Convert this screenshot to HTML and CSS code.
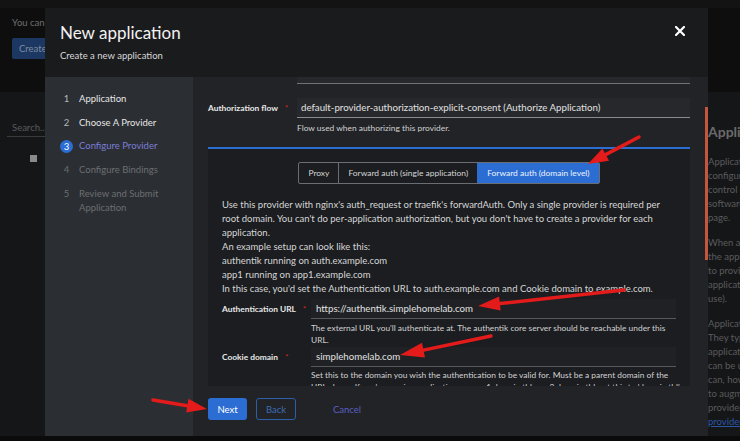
FILE: index.html
```html
<!DOCTYPE html>
<html lang="en">
<head>
<meta charset="utf-8">
<title>New application</title>
<link rel="stylesheet" href="styles.css">
</head>
<body>
<div class="page">
  <header class="page-head">
    <p class="lead">You can create new applications here.</p>
    <button class="btn-create">Create with wizard</button>
  </header>
  <div class="page-body">
    <div class="list">
      <div class="search">Search...</div>
      <span class="check"></span>
    </div>
    <aside class="help">
      <h2>Applications</h2>
      <p><span>Applications define how authentik</span><span>configures access and how you</span><span>control access to your</span><span>software from this single</span><span>page.</span></p>
      <p><span>When a user launches an app,</span><span>the application uses a provider</span><span>to provide authentication for the</span><span>application (the "how" to</span><span>use).</span></p>
      <p><span>Applications are linked to providers.</span><span>They typically map one-to-one to</span><span>applications, though one provider</span><span>can be used by multiple apps. You</span><span>can, however, use backchannel</span><span>to augment the primary</span><span>provider. Read more about</span><a href="#">providers</a></p>
    </aside>
  </div>
</div>
<div class="scroll-thumb"></div>

<div class="modal">
  <header class="modal-head">
    <div>
      <h1>New application</h1>
      <p class="sub">Create a new application</p>
    </div>
    <button class="close" aria-label="Close">
      <svg width="10" height="10" viewBox="0 0 10 10"><path d="M1 1L9 9M9 1L1 9" stroke="#fff" stroke-width="2.2" stroke-linecap="square"/></svg>
    </button>
  </header>
  <div class="modal-body">
    <nav class="steps">
      <ol>
        <li class="done"><span class="num">1</span><span class="lbl">Application</span></li>
        <li class="done"><span class="num">2</span><span class="lbl">Choose A Provider</span></li>
        <li class="current"><span class="num">3</span><span class="lbl">Configure Provider</span></li>
        <li class="todo"><span class="num">4</span><span class="lbl">Configure Bindings</span></li>
        <li class="todo"><span class="num">5</span><span class="lbl">Review and Submit Application</span></li>
      </ol>
    </nav>
    <main class="main">
      <div class="scroll">
        <div class="stub"></div>
        <div class="field">
          <label>Authorization flow <span class="req">*</span></label>
          <div class="input">default-provider-authorization-explicit-consent (Authorize Application)</div>
        </div>
        <p class="helper top-helper">Flow used when authorizing this provider.</p>

        <section class="card">
          <div class="toggle">
            <button>Proxy</button>
            <button>Forward auth (single application)</button>
            <button class="on">Forward auth (domain level)</button>
          </div>
          <p class="desc">Use this provider with nginx's auth_request or traefik's forwardAuth. Only a single provider is required per
root domain. You can't do per-application authorization, but you don't have to create a provider for each
application.
An example setup can look like this:
authentik running on auth.example.com
app1 running on app1.example.com
In this case, you'd set the Authentication URL to auth.example.com and Cookie domain to example.com.</p>
          <div class="field inner">
            <label>Authentication URL <span class="req">*</span></label>
            <div class="input dark">https://authentik.simplehomelab.com</div>
          </div>
          <p class="helper inner-helper">The external URL you'll authenticate at. The authentik core server should be reachable under this<br>URL.</p>
          <div class="field inner cookie">
            <label>Cookie domain <span class="req">*</span></label>
            <div class="input dark">simplehomelab.com</div>
          </div>
          <p class="helper inner-helper last">Set this to the domain you wish the authentication to be valid for. Must be a parent domain of the<br>URL above. If you're running applications as app1.domain.tld, app2.domain.tld, set this to 'domain.tld'.</p>
        </section>
      </div>
      <footer class="foot">
        <button class="btn-next">Next</button>
        <button class="btn-back">Back</button>
        <button class="btn-cancel">Cancel</button>
      </footer>
    </main>
  </div>
</div>

<svg class="marks" width="740" height="441" viewBox="0 0 740 441">
  <g stroke="#e31b1b" stroke-width="3.5" stroke-linecap="round" fill="#e31b1b">
    <line x1="639" y1="137" x2="605.7" y2="154.6"/>
    <polygon stroke="none" points="588,164 609,160.8 602.4,148.4"/>
    <line x1="624" y1="290" x2="499.9" y2="303.6"/>
    <polygon stroke="none" points="478,306 500.6,310.6 499.1,296.6"/>
    <line x1="491" y1="336" x2="423.5" y2="350.1"/>
    <polygon stroke="none" points="400,355 425,357.4 422,342.8"/>
    <line x1="153" y1="400" x2="187.3" y2="405.7"/>
    <polygon stroke="none" points="207,409 186.2,412.6 188.5,398.8"/>
  </g>
</svg>
</body>
</html>
```

FILE: styles.css
```css
* { box-sizing: border-box; margin: 0; padding: 0; }
html, body { width: 740px; height: 441px; overflow: hidden; }
body {
  background: #0b0b0c;
  font-family: Lato, "Liberation Sans", sans-serif;
  color: #d2d2d2;
  position: relative;
}
button { font-family: inherit; border: 0; background: none; cursor: pointer; }

/* background page (dimmed) */
.page { height: 436px; display: flex; flex-direction: column; }
.page-head {
  flex: none;
  height: 92px;
  background: #0e0e0f;
  border-top: 8px solid #131314;
  padding: 8px 12px 0;
}
.lead { font-size: 9.5px; line-height: 14px; color: #6f6f6f; white-space: nowrap; }
.btn-create {
  margin-top: 8px;
  height: 21px;
  padding: 0 7px;
  background: #1c3762;
  color: #7d8ba0;
  font-size: 9.5px;
  border-radius: 2px;
}
.page-body { flex: 1; min-height: 0; overflow: hidden; display: flex; background: #151618; }
.list { flex: 1; padding-top: 29px; }
.search {
  width: 160px;
  margin-left: 7px;
  height: 16px;
  line-height: 14px;
  padding-left: 5px;
  font-size: 9.5px;
  color: #5a5b5e;
  border-bottom: 1px solid #3a3b3e;
}
.check {
  display: block;
  width: 7px;
  height: 7px;
  margin: 18px 0 0 30px;
  background: #8a8a8a;
}
.help { width: 32px; padding-top: 31px; overflow: hidden; white-space: nowrap; }
.help h2 { font-size: 14px; line-height: 18px; font-weight: 700; color: #6a6a6b; margin-bottom: 14px; }
.help p { font-size: 9.5px; line-height: 14px; color: #5b5b5c; margin-bottom: 11px; }
.help p span, .help p a { display: block; }
.help a { color: #2d55a6; text-decoration: underline; }
.scroll-thumb {
  position: absolute;
  left: 705px;
  top: 107px;
  width: 3px;
  height: 153px;
  background: #c5553b;
  z-index: 2;
}

/* modal */
.modal {
  position: absolute;
  left: 45px;
  top: 8px;
  width: 663px;
  height: 428px;
  display: flex;
  flex-direction: column;
  background: #212326;
  z-index: 1;
}
.modal-head {
  height: 69px;
  flex: none;
  background: #1a1b1d;
  padding: 14px 22px 0 15px;
  display: flex;
  justify-content: space-between;
  align-items: flex-start;
}
.modal-head h1 { font-size: 17px; line-height: 22px; font-weight: 400; color: #f2f2f2; }
.modal-head .sub { font-size: 9.5px; line-height: 14px; margin-top: 5px; color: #d8d8d8; }
.close { margin-top: 3px; width: 12px; height: 12px; display: flex; align-items: center; justify-content: center; }

.modal-body { flex: 1; display: flex; min-height: 0; }
.steps { width: 148px; flex: none; background: #2b2e33; padding: 15px 8px 0 15px; }
.steps ol { list-style: none; }
.steps li { display: flex; font-size: 9.5px; line-height: 14px; margin-bottom: 9.7px; }
.steps .num { width: 13px; height: 14px; flex: none; text-align: center; margin-right: 6px; color: #b5b8bb; }
.steps .done .lbl { color: #e6e6e6; }
.steps .current .num {
  background: #2b6dd3;
  color: #fff;
  border-radius: 50%;
  height: 13px;
  line-height: 13px;
  margin-top: 0.5px;
}
.steps .current .lbl { color: #7a7ed6; }
.steps .todo .num, .steps .todo .lbl { color: #6b6e72; }

.main { flex: 1; display: flex; flex-direction: column; min-width: 0; }
.scroll { height: 309px; flex: none; overflow: hidden; padding: 0 18px 0 15px; }
.stub { height: 7px; margin-left: 89px; background: #26282b; border-bottom: 1px solid #6f7276; }

.field { display: grid; grid-template-columns: 89px 1fr; align-items: center; margin-top: 14px; }
.field label { font-size: 8.4px; font-weight: 700; color: #e8e8e8; white-space: nowrap; }
.req { color: #d9261c; margin-left: 5px; font-weight: 400; }
.input {
  height: 20px;
  line-height: 19px;
  padding-left: 4px;
  font-size: 9.7px;
  color: #e2e2e2;
  background: #26282b;
  border-bottom: 1px solid #8a8d90;
  white-space: nowrap;
  overflow: hidden;
}
.input.dark { background: #1f2124; padding-left: 5px; border-bottom-color: #55585c; }
.helper { font-size: 8.4px; line-height: 12px; color: #d2d2d2; }
.top-helper { margin: 4px 0 0 89px; }

.card {
  margin-top: 13px;
  background: #1b1d20;
  border-top: 2px solid #2b6dd3;
  padding: 13px 14px 20px;
}
.toggle {
  display: flex;
  width: max-content;
  margin: 0 auto;
  border: 1px solid #6a6e73;
  border-radius: 2px;
}
.toggle button {
  height: 20px;
  padding: 0 9px;
  font-size: 8.45px;
  color: #d6d6d6;
  border-left: 1px solid #6a6e73;
}
.toggle button:first-child { border-left: 0; }
.toggle button.on { background: #2b6dd3; color: #eef3fb; border-left-color: #2b6dd3; }
.desc {
  margin-top: 14px;
  font-size: 9.5px;
  line-height: 14px;
  white-space: pre-line;
  color: #d6d6d6;
}
.field.inner { margin-top: 3px; }
.field.inner.cookie { margin-top: 1px; }
.inner-helper { margin: 3px 0 0 89px; white-space: nowrap; }
.inner-helper.last { margin-top: 2px; }

.foot { flex: 1; display: flex; align-items: flex-start; padding: 12px 15px 0; }
.foot button { height: 22px; font-size: 9.5px; border-radius: 3px; }
.btn-next { width: 39px; background: #2b6dd3; color: #fff; }
.btn-back { width: 40px; margin-left: 9px; border: 1px solid #2d5ea8; color: #3e6cb4; }
.btn-cancel { margin-left: 25px; padding: 0 12px; color: #5a5fc4; }

.marks { position: absolute; left: 0; top: 0; z-index: 3; pointer-events: none; }
```
